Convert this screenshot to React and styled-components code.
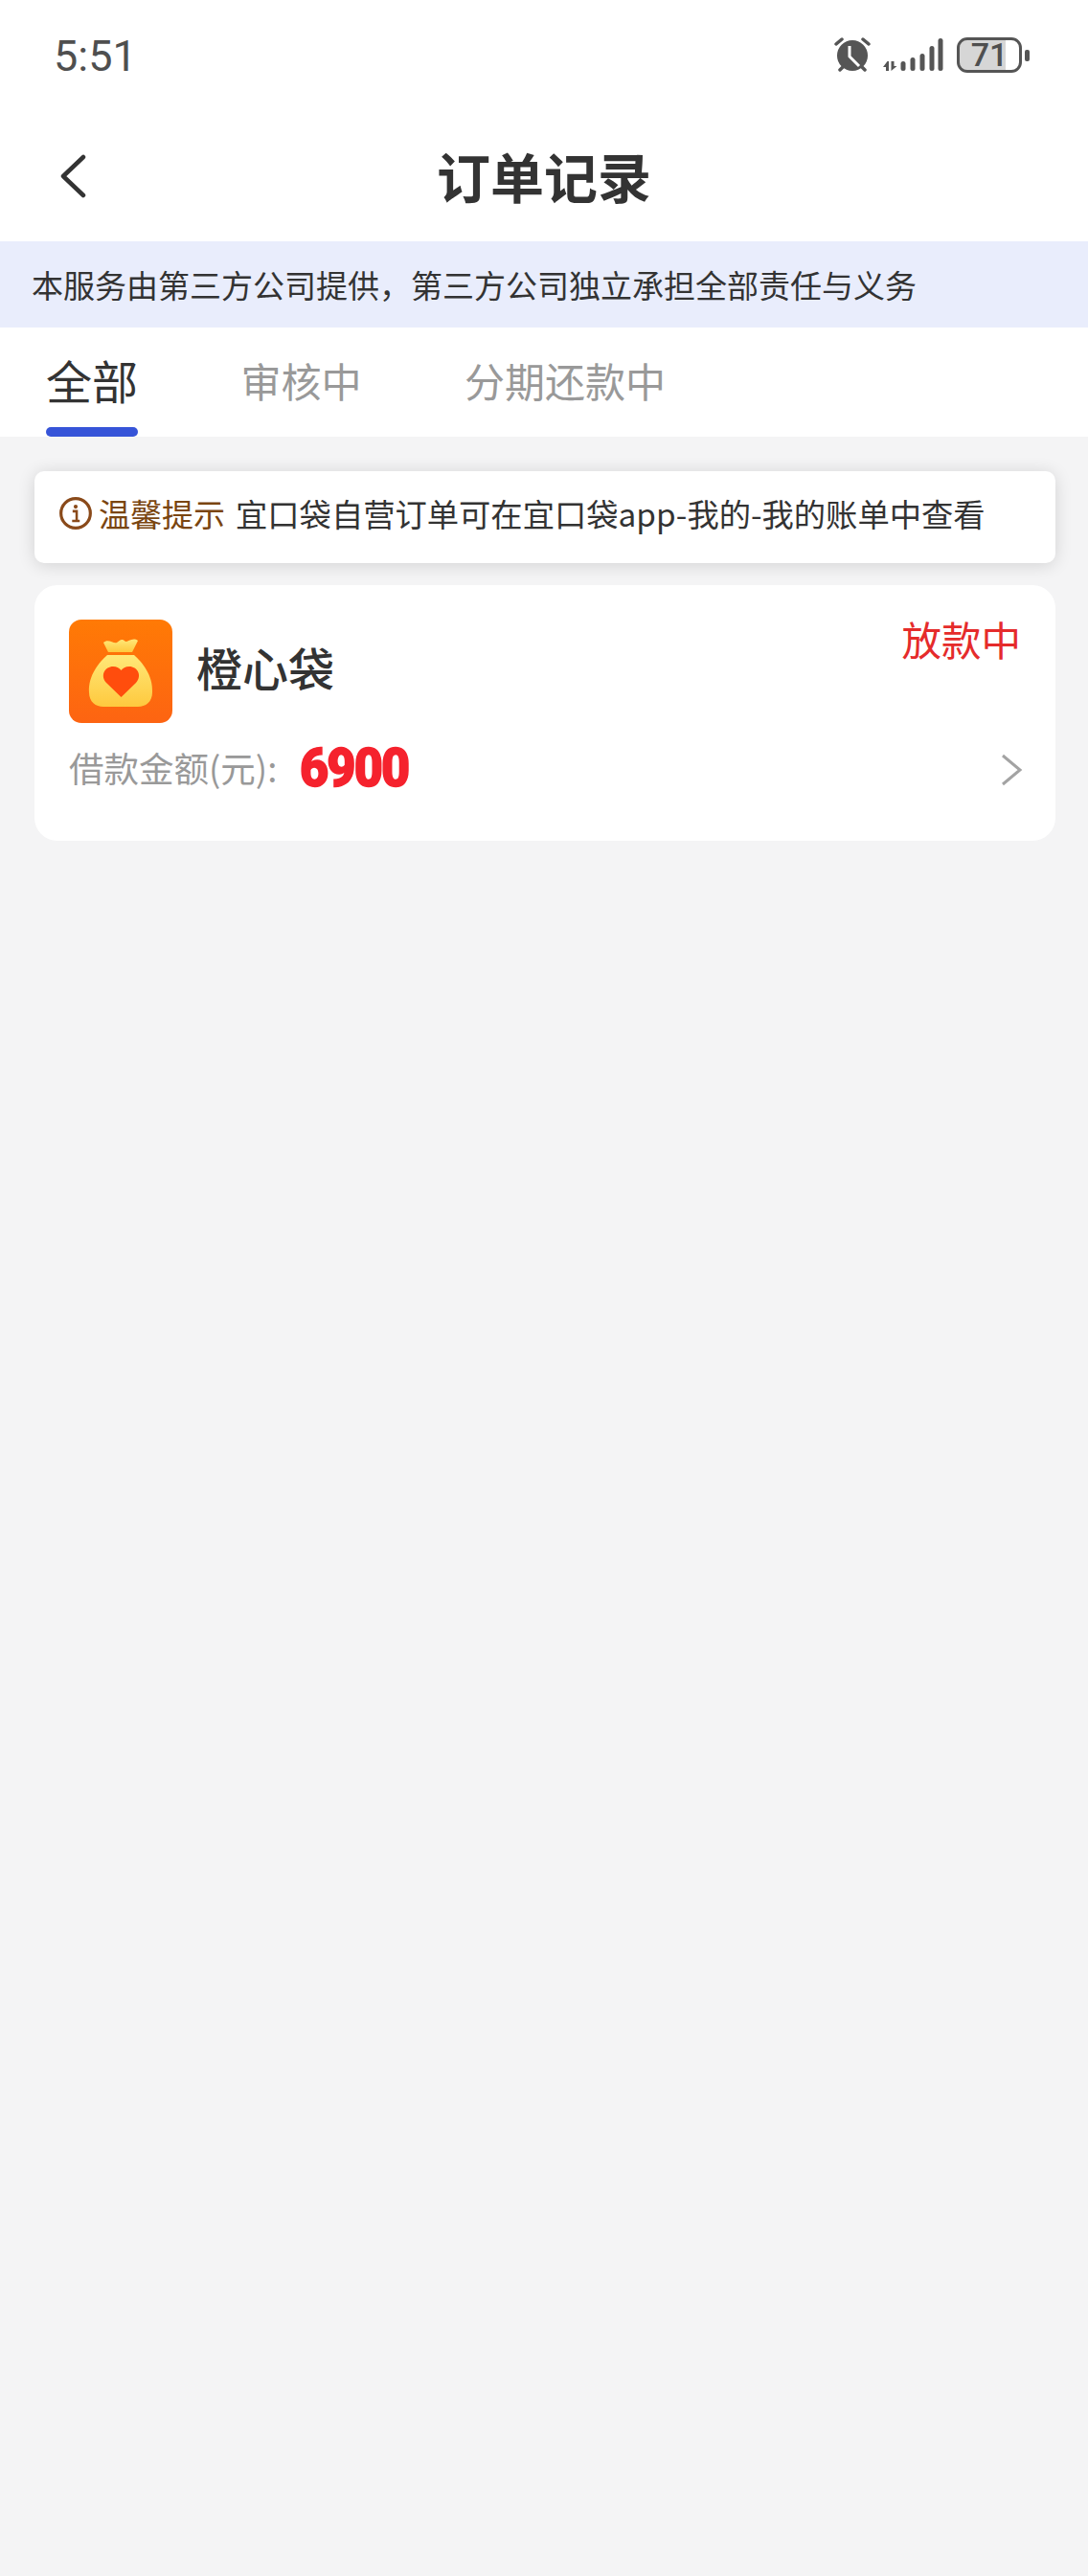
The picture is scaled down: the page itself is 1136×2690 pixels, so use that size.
import React from "react";
import styled, { createGlobalStyle } from "styled-components";

const GlobalStyle = createGlobalStyle`
  body {
    margin: 0;
    background: #f4f4f5;
    font-family: "Noto Sans CJK SC", "Noto Sans", sans-serif;
    color: #333;
  }
`;

const Page = styled.div`
  width: 1136px;
  min-height: 2690px;
  background: #f4f4f5;
`;

const Top = styled.div`
  background: #fff;
`;

const StatusBar = styled.div`
  height: 116px;
  padding: 0 61px 0 56px;
  box-sizing: border-box;
  display: flex;
  align-items: flex-start;
  justify-content: space-between;
`;

const Time = styled.span`
  margin-top: 33px;
  font-family: Roboto, sans-serif;
  font-size: 45px;
  line-height: 52px;
  color: #4f4f4f;
`;

const StatusIcons = styled.div`
  margin-top: 39px;
  display: flex;
  align-items: flex-start;
`;

const Battery = styled.div`
  width: 68px;
  height: 37px;
  margin-left: 13px;
  box-sizing: border-box;
  border: 3px solid #555;
  border-radius: 11px;
  background: linear-gradient(to right, #d6d6d6 78%, transparent 78%);
  background-clip: padding-box;
  font-family: Roboto, sans-serif;
  font-size: 34px;
  font-weight: 500;
  line-height: 31px;
  text-align: center;
  color: #4f4f4f;
`;

const BatteryNub = styled.div`
  width: 5px;
  height: 12px;
  margin: 13px 0 0 3px;
  border-radius: 2px;
  background: #555;
`;

const NavBar = styled.div`
  height: 136px;
  padding-left: 62px;
  display: grid;
  grid-template-columns: 40px 1fr 102px;
  align-items: center;
`;

const Title = styled.h1`
  margin: 0 0 3px;
  text-align: center;
  font-size: 56px;
  line-height: 70px;
  font-weight: 700;
  color: #333;
`;

const Notice = styled.div`
  height: 90px;
  padding-left: 33px;
  display: flex;
  align-items: center;
  background: #e9edfc;
  font-size: 33px;
  color: #333;
`;

const Tabs = styled.div`
  height: 114px;
  padding-left: 48px;
  display: flex;
  gap: 107.5px;
  background: #fff;
`;

const Tab = styled.div`
  position: relative;
  display: flex;
  align-items: center;
  height: 114px;
  padding-bottom: 6px;
  box-sizing: border-box;
  font-size: ${(p) => (p.$active ? "48px" : "42px")};
  color: ${(p) => (p.$active ? "#333" : "#999")};

  ${(p) =>
    p.$active &&
    `&::after {
      content: "";
      position: absolute;
      left: 0;
      right: 0;
      bottom: 0;
      height: 10px;
      border-radius: 5px;
      background: #3654d8;
    }`}
`;

const Content = styled.div`
  padding: 36px 34px 0 36px;
  display: flex;
  flex-direction: column;
  gap: 23px;
`;

const TipCard = styled.div`
  height: 96px;
  padding: 0 0 9px 25px;
  box-sizing: border-box;
  display: flex;
  align-items: center;
  background: #fff;
  border-radius: 10px;
  box-shadow: 0 2px 18px rgba(0, 0, 0, 0.14);
  font-size: 33.3px;
`;

const TipLabel = styled.span`
  margin-left: 6px;
  font-size: 33px;
  color: #7a4510;
`;

const TipText = styled.span`
  margin-left: 11px;
  color: #333;
`;

const OrderCard = styled.div`
  height: 267px;
  padding: 36px 34px 0 36px;
  box-sizing: border-box;
  background: #fff;
  border-radius: 24px;
`;

const OrderTop = styled.div`
  display: flex;
  align-items: flex-start;
`;

const AppName = styled.span`
  margin: 19px 0 0 25px;
  flex: 1;
  font-size: 48px;
  font-weight: 500;
  line-height: 60px;
  color: #333;
`;

const Status = styled.span`
  margin: -5px 2px 0 0;
  font-size: 41.5px;
  line-height: 50px;
  color: #e52b2b;
`;

const OrderBottom = styled.div`
  margin-top: 17px;
  display: flex;
  align-items: center;
`;

const AmountLabel = styled.span`
  font-size: 36.5px;
  line-height: 60px;
  color: #999;
`;

const Amount = styled.span`
  margin-left: 24px;
  flex: 1;
  font-family: Roboto, sans-serif;
  font-size: 56px;
  line-height: 60px;
  font-weight: 900;
  letter-spacing: -2px;
  color: #f5222d;
  -webkit-text-stroke: 1.5px #f5222d;
  transform: scaleX(0.93);
  transform-origin: left center;
`;

const AlarmIcon = () => (
  <svg width="38" height="36" viewBox="0 0 38 36">
    <circle cx="19" cy="19" r="16" fill="#555" />
    <path d="M2 7 L8 2 M36 7 L30 2 M6 34 L10 30 M32 34 L28 30" stroke="#555" strokeWidth="3.5" strokeLinecap="round" />
    <path d="M16 9 V20 L26 30" stroke="#fff" strokeWidth="3" fill="none" />
  </svg>
);

const SignalIcon = () => (
  <svg width="64" height="36" viewBox="0 0 64 36" style={{ marginLeft: 13 }}>
    <path d="M4.5 25 L0 31 H3 V35 H6 V25 Z M8.5 25 V35 L14.5 30 H11.5 V25 Z" fill="#555" />
    {[
      [21, 25],
      [31, 21],
      [41, 17],
      [51, 9],
      [60, 1],
    ].map(([x, top]) => (
      <rect key={x} x={x - 2.5} y={top} width="5" height={35 - top} rx="2.5" fill="#555" />
    ))}
  </svg>
);

const BackIcon = () => (
  <svg width="28" height="46" viewBox="0 0 28 46">
    <path d="M25 3 L4 23 L25 43" stroke="#333" strokeWidth="4.5" fill="none" strokeLinecap="round" strokeLinejoin="round" />
  </svg>
);

const InfoIcon = () => (
  <svg width="36" height="36" viewBox="0 0 34 34">
    <circle cx="17" cy="17" r="14.5" stroke="#8a4a1a" strokeWidth="3" fill="none" />
    <circle cx="17" cy="10.5" r="2" fill="#8a4a1a" />
    <path d="M14 15 H18 V24 M13.5 24.5 H21" stroke="#8a4a1a" strokeWidth="2.4" fill="none" />
  </svg>
);

const ChevronIcon = () => (
  <svg width="24" height="34" viewBox="0 0 24 34" style={{ marginTop: 3 }}>
    <path d="M3 2 L21 17 L3 32" stroke="#a3a3a3" strokeWidth="3" fill="none" />
  </svg>
);

const BagLogo = () => (
  <svg width="108" height="108" viewBox="0 0 108 108" style={{ flexShrink: 0 }}>
    <defs>
      <linearGradient id="bagBg" x1="0" y1="0" x2="0" y2="1">
        <stop offset="0" stopColor="#ff7a05" />
        <stop offset="1" stopColor="#fd6412" />
      </linearGradient>
      <linearGradient id="bagBody" x1="0" y1="0" x2="0" y2="1">
        <stop offset="0" stopColor="#ffe878" />
        <stop offset="1" stopColor="#fec93e" />
      </linearGradient>
    </defs>
    <rect width="108" height="108" rx="13" fill="url(#bagBg)" />
    <path d="M40 37 H68 C76 44 88 58 87 76 C87 86 80 91 72 91 H36 C28 91 21 86 21 76 C20 58 32 44 40 37 Z" fill="url(#bagBody)" />
    <path d="M41 34 L36 24 C41 19 47 26 50 24 C53 22 55 19 59 23 C62 23 67 18 72 22 L66 34 Z" fill="url(#bagBody)" />
    <path d="M54.5 81 L39 66 C32 58 38 49 46 49 C50 49 53 51 54.5 53 C56 51 59 49 63 49 C71 49 77 58 70 66 Z" fill="#ff4d0d" />
  </svg>
);

export default function App() {
  return (
    <Page>
      <GlobalStyle />
      <Top>
        <StatusBar>
          <Time>5:51</Time>
          <StatusIcons>
            <AlarmIcon />
            <SignalIcon />
            <Battery>71</Battery>
            <BatteryNub />
          </StatusIcons>
        </StatusBar>
        <NavBar>
          <BackIcon />
          <Title>订单记录</Title>
        </NavBar>
      </Top>
      <Notice>本服务由第三方公司提供，第三方公司独立承担全部责任与义务</Notice>
      <Tabs>
        <Tab $active>全部</Tab>
        <Tab>审核中</Tab>
        <Tab>分期还款中</Tab>
      </Tabs>
      <Content>
        <TipCard>
          <InfoIcon />
          <TipLabel>温馨提示</TipLabel>
          <TipText>宜口袋自营订单可在宜口袋app-我的-我的账单中查看</TipText>
        </TipCard>
        <OrderCard>
          <OrderTop>
            <BagLogo />
            <AppName>橙心袋</AppName>
            <Status>放款中</Status>
          </OrderTop>
          <OrderBottom>
            <AmountLabel>借款金额(元):</AmountLabel>
            <Amount>6900</Amount>
            <ChevronIcon />
          </OrderBottom>
        </OrderCard>
      </Content>
    </Page>
  );
}
